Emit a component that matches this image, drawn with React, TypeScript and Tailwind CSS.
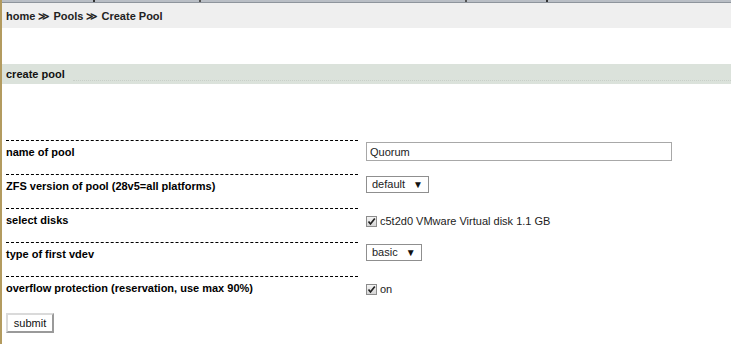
const rows = [
  { label: "name of pool", kind: "input" },
  { label: "ZFS version of pool (28v5=all platforms)", kind: "select", value: "default" },
  { label: "select disks", kind: "check", value: "c5t2d0 VMware Virtual disk 1.1 GB" },
  { label: "type of first vdev", kind: "select", value: "basic" },
  { label: "overflow protection (reservation, use max 90%)", kind: "check", value: "on" },
];

const Check = () => (
  <span className="flex h-[11px] w-[11px] items-center justify-center border border-[#8c8c8c] bg-gradient-to-b from-[#f4f4f4] to-[#d6d6d6]">
    <svg width="9" height="9" viewBox="0 0 9 9">
      <path d="M1.5 4.5 L3.5 7 L7.8 1.5" fill="none" stroke="#222" strokeWidth="1.7" />
    </svg>
  </span>
);

const Select = ({ value }: { value: string }) => (
  <span className="flex h-[17px] items-center gap-[8px] border border-[#8f8f8f] bg-white pl-[5px] pr-[5px] text-[11px] text-[#222]">
    {value}
    <span className="text-[10px] leading-none text-[#111]">▼</span>
  </span>
);

export default function App() {
  return (
    <div
      className="h-[344px] w-[731px] overflow-hidden border-l-2 border-[#b39b5f] bg-white text-black"
      style={{ fontFamily: '"Liberation Sans", Arial, sans-serif' }}
    >
      {/* cut-off tab strip */}
      <div className="flex h-[3px] border-b border-[#8e949c] bg-[#b9bec5]">
        <div className="w-[91px]" />
        <div className="w-[2px] bg-[#333]" />
        <div className="w-[104px]" />
        <div className="w-[2px] bg-[#555]" />
        <div className="w-[264px]" />
        <div className="w-[2px] bg-[#555]" />
        <div className="w-[79px]" />
        <div className="w-[2px] bg-[#333]" />
      </div>

      <div className="flex h-[25px] items-center bg-[#efefef] pl-[4px] pt-[1px] text-[11px] font-bold text-[#222]">
        home ≫ Pools ≫ Create Pool
      </div>

      <div className="mt-[36px] flex h-[20px] items-center bg-[#dbe2db] pl-[4px]">
        <span className="text-[11px] font-bold text-[#111]">create pool</span>
        <span className="mb-[3px] ml-[8px] flex-1 self-end border-b border-dotted border-[#c9d0c9]" />
      </div>

      <div className="mt-[56px] grid grid-cols-[352px_1fr] pl-[4px]">
        {rows.map((r) => (
          <div key={r.label} className="contents">
            <div className="h-[34px] border-t border-dashed border-black pt-[4px] text-[11px] font-bold leading-[14px]">
              {r.label}
            </div>
            <div className="flex h-[34px] items-start pl-[8px] text-[11px] text-[#222]">
              {r.kind === "input" && (
                <input
                  readOnly
                  value="Quorum"
                  className="mt-[2px] h-[19px] w-[306px] border border-[#a8a8a8] px-[3px] text-[11px] text-[#222] outline-none"
                />
              )}
              {r.kind === "select" && (
                <div className="mt-[2px]">
                  <Select value={r.value!} />
                </div>
              )}
              {r.kind === "check" && (
                <div className="mt-[5px] flex items-center gap-[3px]">
                  <Check />
                  <span>{r.value}</span>
                </div>
              )}
            </div>
          </div>
        ))}
      </div>

      <div className="pl-[4px]">
        <button className="h-[20px] w-[48px] border-2 border-t-[#dadada] border-l-[#dadada] border-r-[#9a9a9a] border-b-[#9a9a9a] bg-white text-[11px] text-[#111]">
          submit
        </button>
      </div>
    </div>
  );
}
